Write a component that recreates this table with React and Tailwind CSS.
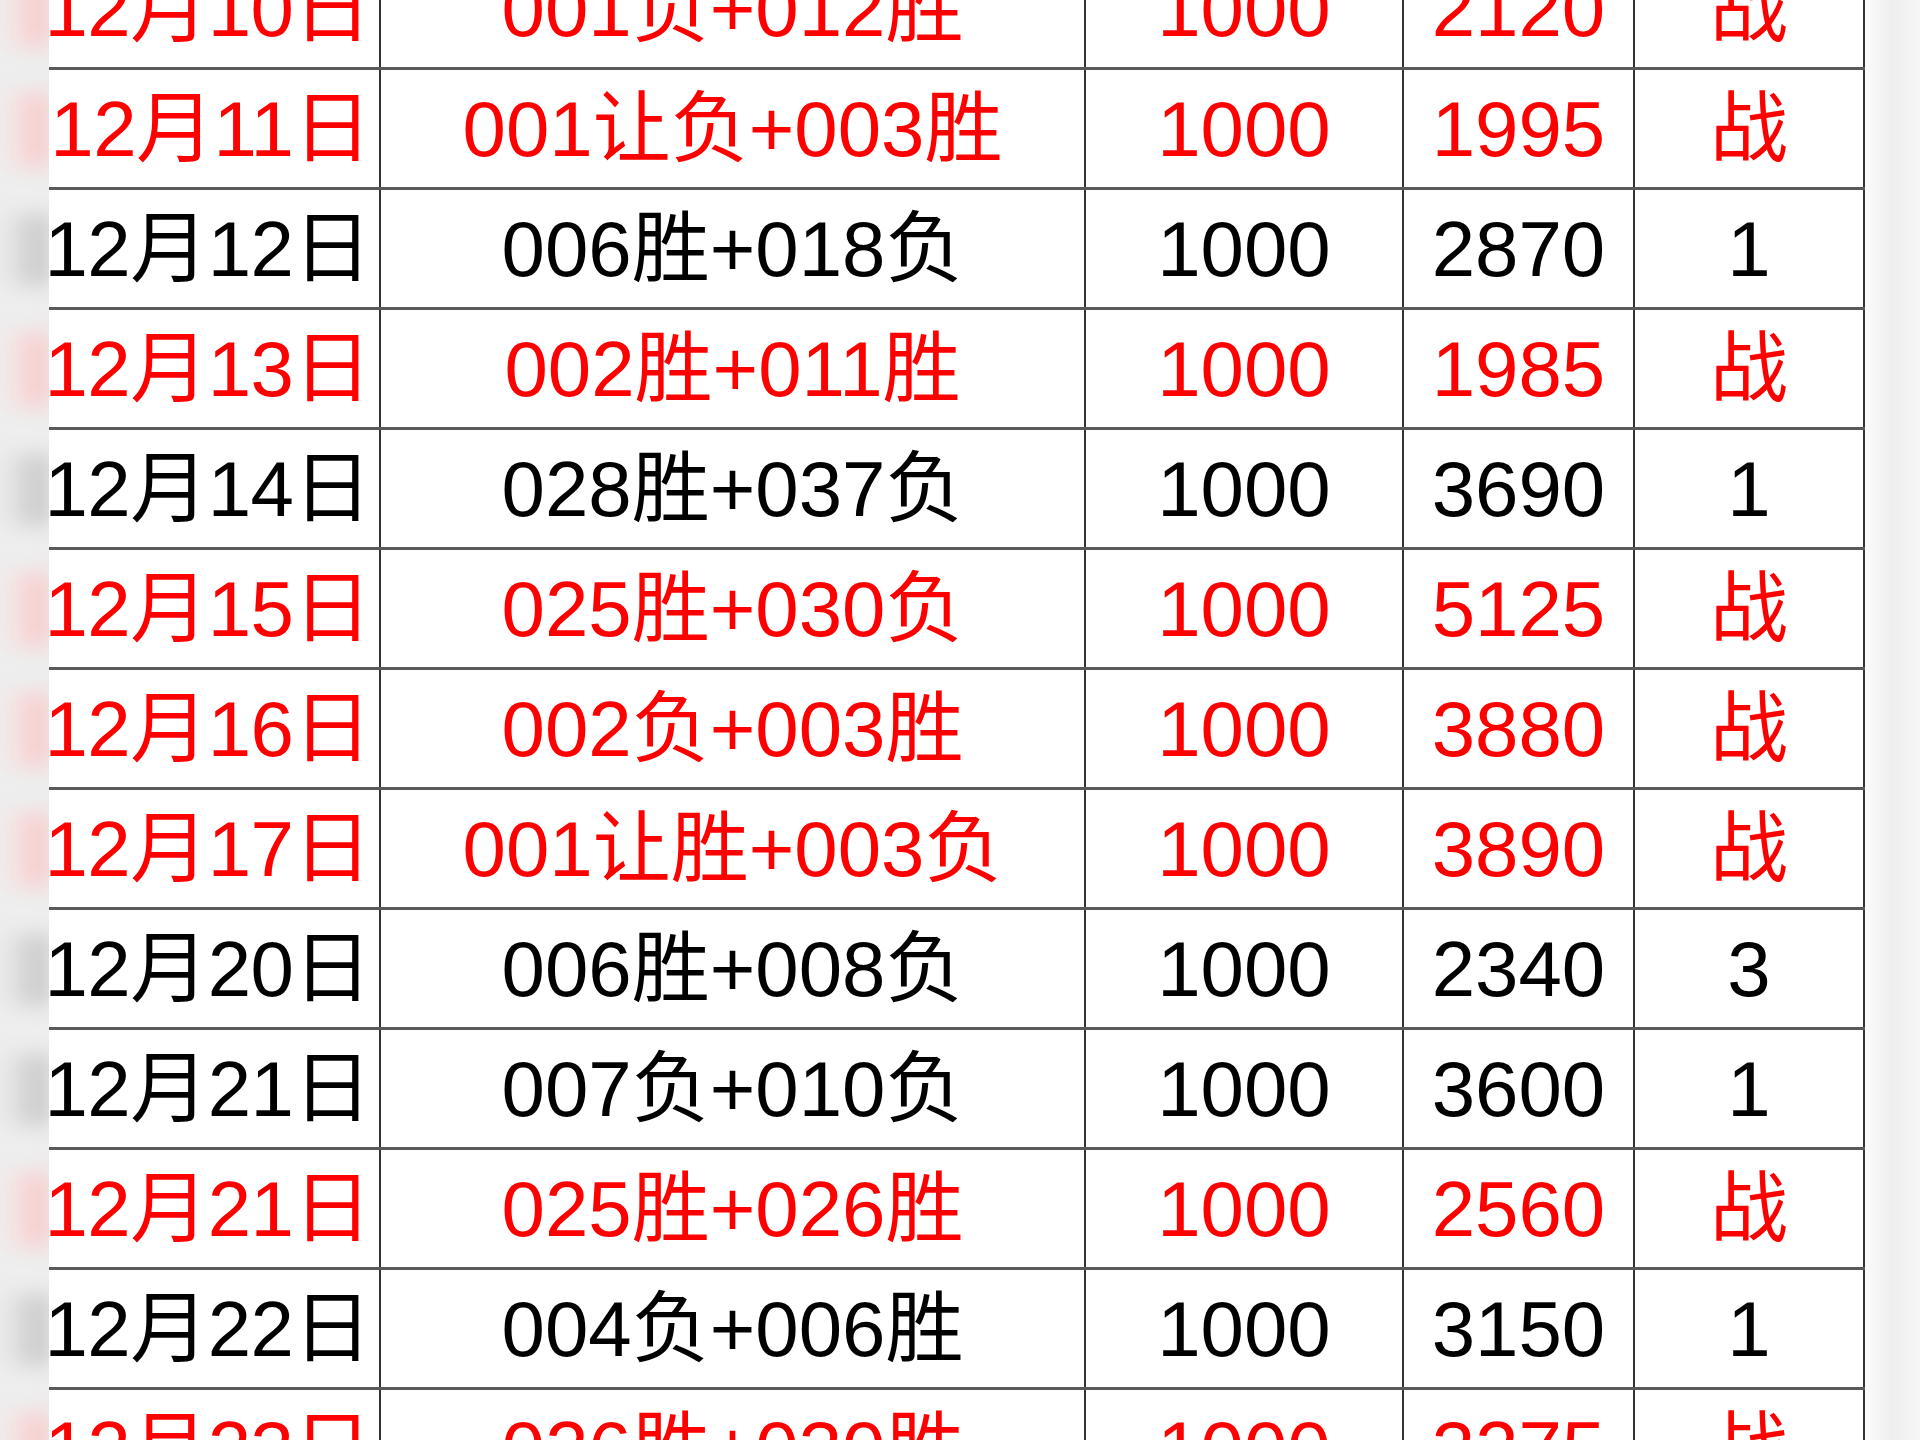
import React from 'react';

const rows = [
    { date: '12月10日', pick: '001负+012胜', stake: '1000', ret: '2120', mark: '战', red: true },
    { date: '12月11日', pick: '001让负+003胜', stake: '1000', ret: '1995', mark: '战', red: true },
    { date: '12月12日', pick: '006胜+018负', stake: '1000', ret: '2870', mark: '1', red: false },
    { date: '12月13日', pick: '002胜+011胜', stake: '1000', ret: '1985', mark: '战', red: true },
    { date: '12月14日', pick: '028胜+037负', stake: '1000', ret: '3690', mark: '1', red: false },
    { date: '12月15日', pick: '025胜+030负', stake: '1000', ret: '5125', mark: '战', red: true },
    { date: '12月16日', pick: '002负+003胜', stake: '1000', ret: '3880', mark: '战', red: true },
    { date: '12月17日', pick: '001让胜+003负', stake: '1000', ret: '3890', mark: '战', red: true },
    { date: '12月20日', pick: '006胜+008负', stake: '1000', ret: '2340', mark: '3', red: false },
    { date: '12月21日', pick: '007负+010负', stake: '1000', ret: '3600', mark: '1', red: false },
    { date: '12月21日', pick: '025胜+026胜', stake: '1000', ret: '2560', mark: '战', red: true },
    { date: '12月22日', pick: '004负+006胜', stake: '1000', ret: '3150', mark: '1', red: false },
    { date: '12月23日', pick: '026胜+030胜', stake: '1000', ret: '3275', mark: '战', red: true },
];

const font = { fontFamily: '"Liberation Sans", "Noto Sans CJK SC", sans-serif' };

// blurred edge of the photo, tinted by the row beside it
const BlurStrip = () => (
    <div className="w-[49px] shrink-0 h-full overflow-hidden bg-[#eeeeee]">
        <div className="flex flex-col mt-[-50px] blur-[10px]">
            {rows.map((r, i) => (
                <div key={i} className="h-[120px] flex items-center">
                    <div
                        className={
                            r.red
                                ? 'h-[76px] w-full bg-gradient-to-r from-[#f2eeee] to-[#f9c4c4]'
                                : 'h-[72px] w-full bg-gradient-to-r from-[#ececec] to-[#c2c2c2]'
                        }
                    />
                </div>
            ))}
        </div>
    </div>
);

const Row = ({ r }) => {
    const color = r.red ? 'text-[#ff0000]' : 'text-black';
    return (
        <div className={`grid grid-cols-[332px_705px_318px_231px_230px] h-[120px] shrink-0 border-b-[3px] border-[#5a5a5a] text-[78px] leading-none ${color}`}>
            <div className="flex items-center justify-end pr-[8px] border-r-2 border-[#333] tracking-[-0.5px] whitespace-nowrap">{r.date}</div>
            <div className="flex items-center justify-center border-r-2 border-[#333] whitespace-nowrap">{r.pick}</div>
            <div className="flex items-center justify-center border-r-2 border-[#333]">{r.stake}</div>
            <div className="flex items-center justify-center border-r-2 border-[#333]">{r.ret}</div>
            <div className="flex items-center justify-center border-r-2 border-[#333]">{r.mark}</div>
        </div>
    );
};

export default function App() {
    return (
        <div className="w-[1920px] h-[1440px] overflow-hidden flex bg-white" style={font}>
            <BlurStrip />
            <div className="w-[1816px] shrink-0 h-full overflow-hidden bg-white">
                <div className="flex flex-col mt-[-50px]">
                    {rows.map((r, i) => (
                        <Row key={i} r={r} />
                    ))}
                </div>
            </div>
            <div className="flex-1 h-full bg-gradient-to-r from-[#fbfbfb] via-[#eeeeee] to-[#f6f6f6]" />
        </div>
    );
}
